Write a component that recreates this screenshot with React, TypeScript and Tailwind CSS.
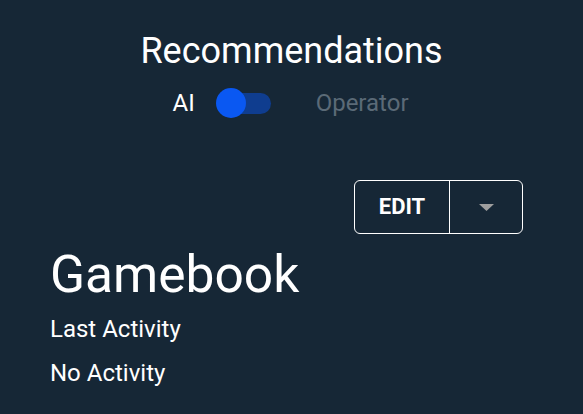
export default function App() {
  return (
    <div
      className="w-[583px] h-[414px] bg-[#162736] text-white overflow-hidden"
      style={{ fontFamily: "Roboto, 'Liberation Sans', sans-serif" }}
    >
      <div className="flex flex-col items-center pt-[30px]">
        <h1 className="text-[36px] leading-[42px] font-normal">Recommendations</h1>
        <div className="flex items-center mt-[16px] h-[30px] pr-[2px]">
          <span className="text-[24px] leading-none">AI</span>
          <div className="relative ml-[21px] w-[55px] h-[30px] flex items-center">
            <div className="absolute left-[4px] right-0 h-[21px] rounded-full bg-[#0f3d8f]" />
            <div className="absolute left-0 w-[30px] h-[30px] rounded-full bg-[#0a58f2]" />
          </div>
          <span className="ml-[45px] text-[24px] leading-none text-[#5b6a77]">Operator</span>
        </div>
      </div>

      <div className="flex justify-end pr-[60px] mt-[62px]">
        <div className="flex h-[54px] border border-white rounded-[6px]">
          <button className="w-[94px] flex items-center justify-center text-[22px] leading-none font-bold">
            EDIT
          </button>
          <div className="w-px bg-white" />
          <button className="w-[72px] flex items-center justify-center">
            <svg width="15" height="7" viewBox="0 0 15 7">
              <path d="M0 0 L15 0 L7.5 7 Z" fill="#9e9e9e" />
            </svg>
          </button>
        </div>
      </div>

      <div className="pl-[50px] mt-[11px]">
        <div className="text-[51.5px] leading-[60px]">Gamebook</div>
        <div className="text-[24px] leading-[28px] mt-[10px]">Last Activity</div>
        <div className="text-[24px] leading-[28px] mt-[16px]">No Activity</div>
      </div>
    </div>
  );
}
